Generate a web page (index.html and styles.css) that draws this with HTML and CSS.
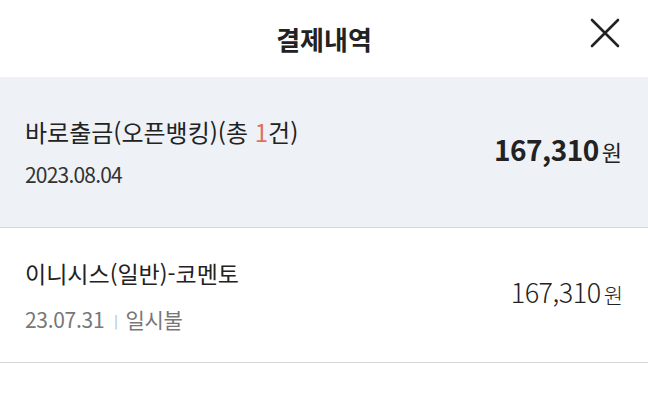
FILE: index.html
```html
<!DOCTYPE html>
<html lang="ko">
<head>
  <meta charset="UTF-8" />
  <meta name="viewport" content="width=device-width, initial-scale=1.0"/>
  <title>결제내역</title>
  <link rel="stylesheet" href="styles.css">
</head>
<body>
  <header class="top-bar">
    <h1>결제내역</h1>
    <button class="close-btn" aria-label="닫기">
      <svg width="30" height="30" viewBox="0 0 30 30">
        <path d="M2 2 L28 28 M28 2 L2 28" stroke="#222" stroke-width="2.6" stroke-linecap="round" fill="none"/>
      </svg>
    </button>
  </header>

  <ul class="pay-list">
    <li class="pay-item summary">
      <div class="info">
        <div class="name">바로출금(오픈뱅킹)(총 <span class="count">1</span>건)</div>
        <div class="date">2023.08.04</div>
      </div>
      <div class="amount"><strong>167,310</strong><span class="won">원</span></div>
    </li>
    <li class="pay-item">
      <div class="info">
        <div class="name">이니시스(일반)-코멘토</div>
        <div class="date sub">23.07.31<span class="sep">|</span>일시불</div>
      </div>
      <div class="amount light"><span class="num">167,310</span><span class="won">원</span></div>
    </li>
  </ul>
</body>
</html>
```

FILE: styles.css
```css
* {
  box-sizing: border-box;
  font-family: "Noto Sans CJK KR", "Noto Sans", sans-serif;
}
body {
  margin: 0;
  padding: 0;
  background: #fff;
  color: #222;
}
.top-bar {
  height: 77px;
  display: flex;
  align-items: center;
  justify-content: center;
  position: relative;
}
.top-bar h1 {
  margin: 0;
  font-size: 26px;
  line-height: 32px;
  font-weight: 700;
  color: #222;
}
.close-btn {
  position: absolute;
  right: 28px;
  top: 18px;
  width: 30px;
  height: 30px;
  padding: 0;
  border: none;
  background: none;
}
.close-btn svg {
  display: block;
}

.pay-list {
  list-style: none;
  margin: 0;
  padding: 0;
}
.pay-item {
  display: flex;
  align-items: center;
  justify-content: space-between;
  padding: 29px 25px 25px;
  border-bottom: 1px solid #d6d6d6;
}
.pay-item.summary {
  background: #eef1f6;
  padding: 39px 26px 37px 25px;
}
.name {
  font-size: 24px;
  line-height: 32px;
  color: #222;
}
.pay-item:not(.summary) .name {
  font-size: 23px;
}
.count {
  color: #e0705e;
}
.date {
  margin-top: 10px;
  font-size: 21px;
  line-height: 32px;
  color: #333;
  letter-spacing: -0.8px;
}
.date.sub {
  margin-top: 14px;
  font-size: 21px;
  color: #777;
  letter-spacing: -0.3px;
}
.sep {
  display: inline-block;
  margin: 0 8px 0 10px;
  font-size: 13px;
  color: #aaa;
  vertical-align: 2px;
}
.amount {
  display: flex;
  align-items: baseline;
  color: #222;
  margin-bottom: 8px;
}
.amount strong {
  font-size: 28px;
  font-weight: 700;
  letter-spacing: -0.5px;
}
.amount .won {
  margin-left: 3px;
  font-size: 22px;
}
.amount.light {
  margin-bottom: 12px;
}
.amount.light .num {
  font-size: 27px;
  font-weight: 300;
  letter-spacing: -0.5px;
}
.amount.light .won {
  font-size: 21px;
  font-weight: 300;
}
```
